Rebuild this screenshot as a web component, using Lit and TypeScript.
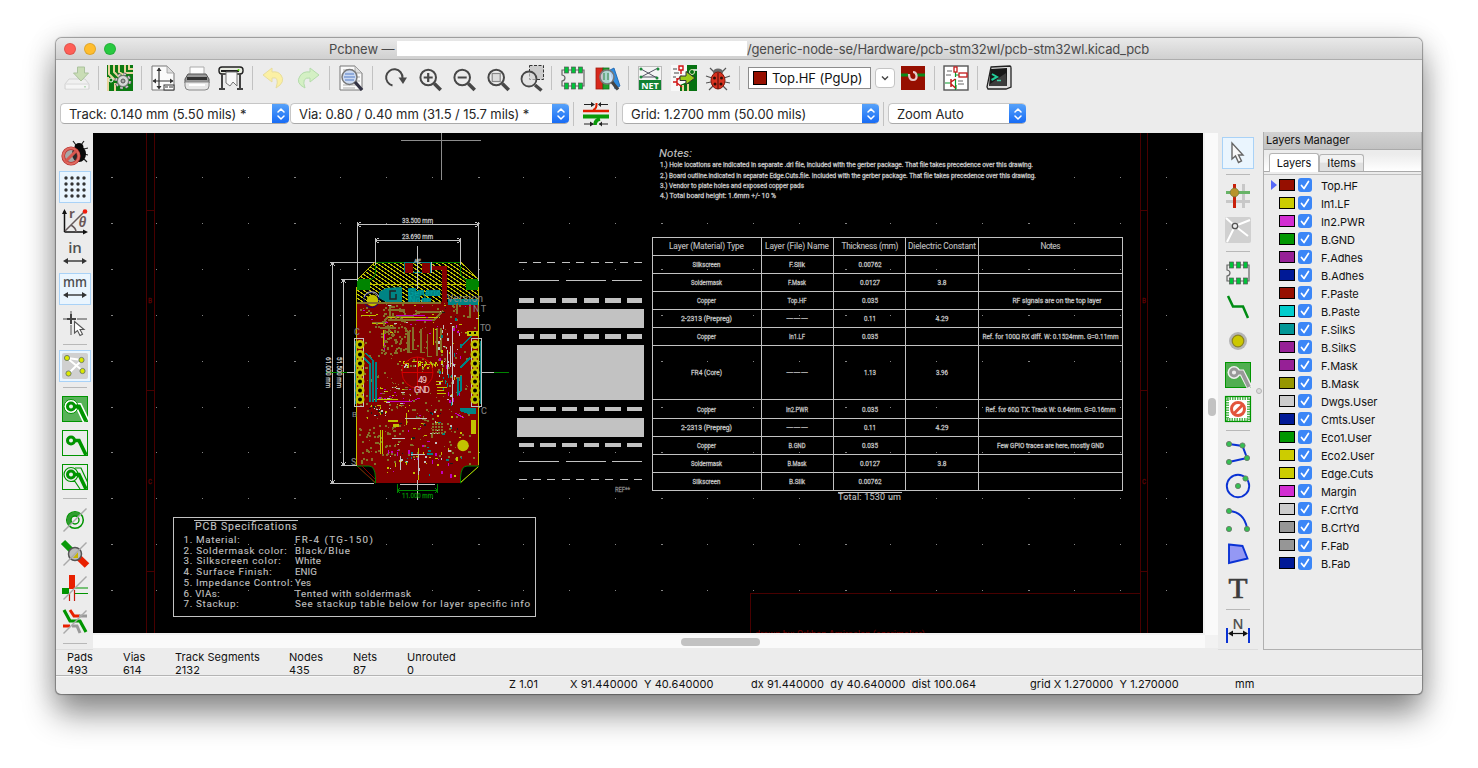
import { LitElement, html, svg, css } from "lit";
import { customElement, property } from "lit/decorators.js";
import { classMap } from "lit/directives/class-map.js";

const G = "#009400";
const LENS = "#484848";

const pageDoc = svg`<path d="M2 1H17L24 8V25H2Z" fill="#fafafa" stroke="#777"/><path d="M17 1V8H24Z" fill="#ddd" stroke="#999" stroke-width=".8"/>`;
const lens = (extra: unknown) => svg`<g transform="translate(.7 0)"><circle cx="12.500" cy="12.500" r="7.800" fill="none" stroke=${LENS} stroke-width="2"/><path d="M18.500 18.500L25 25" stroke=${LENS} stroke-width="3.600"/>${extra}</g>`;
const chip = svg`<path d="M2 5H24V21H2V16Q5 15.5 5 13Q5 10.5 2 10Z" fill="none" stroke="#666" stroke-width="1.2"/>
  ${[5, 12, 19].map((x) => svg`<rect x=${x - 0.5} y="2" width="4" height="6" fill="#00c43a" stroke="#555" stroke-width=".7"/><rect x=${x - 0.5} y="18" width="4" height="6" fill="#00c43a" stroke="#555" stroke-width=".7"/>`)}`;
const node = (x: number, y: number, c = "#35c052") => svg`<circle cx=${x} cy=${y} r="2.6" fill=${c} stroke="#687868" stroke-width=".9"/>`;
const slash = svg`<path d="M1.500 24.500L24.500 1.500" stroke="#aaa" stroke-width="1.500"/>`;

const ICONS: Record<string, unknown> = {
  save: svg`<g opacity=".5"><path d="M5 14H21L25 19V24H1V19Z" fill="#f4f4f4" stroke="#bbb"/><path d="M1.500 19H24.500" stroke="#ccc"/><rect x="2" y="20" width="22" height="3.500" fill="#fff"/><rect x="20" y="21" width="2" height="1.500" fill="#8c8"/><path d="M13.500 2H20.500V8H24.500L17 16L9.500 8H13.500Z" fill="#a8cf80" stroke="#6c9a50"/></g>`,
  boardSetup: svg`<rect width="26" height="26" fill="#0b7a12"/><path d="M2 0V9L8 15M7 0V7L12 12M12 0V7L17 10M18 0V8H26M22 0V4H26M1 12V26M8 18V26" stroke="#e8d49c" stroke-width="2" fill="none"/><circle cx="4" cy="15" r="2" fill="#0b7a12" stroke="#fff"/><circle cx="16" cy="16" r="7" fill="none" stroke="#555" stroke-width="3" stroke-dasharray="2.800 2.700"/><circle cx="16" cy="16" r="7" fill="none" stroke="#ccc" stroke-width="1.600" stroke-dasharray="2.800 2.700"/><circle cx="16" cy="16" r="5.500" fill="#d8d8d8" stroke="#777"/><circle cx="16" cy="16" r="2" fill="#aaa" stroke="#555"/>`,
  pageSize: svg`${pageDoc}<path d="M9 3V23M3 16H23" stroke="#333" stroke-width="1.200"/><path d="M6.500 6L9 2.500L11.500 6ZM6.500 21L9 24.500L11.500 21ZM6 13.500L2.500 16L6 18.500ZM20 13.500L23.500 16L20 18.500Z" fill="#333"/><rect x="14" y="20" width="10" height="5" fill="#fff" stroke="#333"/><path d="M15 22H18M19 22H23" stroke="#333"/>`,
  print: svg`<path d="M6 2H20V11H6Z" fill="#fcfcfc" stroke="#aaa"/><path d="M4 9H22L25 14V18H1V14Z" fill="#999" stroke="#555"/><path d="M3 12H23V15H3Z" fill="#333"/><path d="M1 17H25V21Q25 25 21 25H5Q1 25 1 21Z" fill="#e8e8e8" stroke="#888"/><path d="M5 20H21" stroke="#fff" stroke-width="2"/>`,
  plot: svg`<rect x="1" y="2" width="24" height="7" rx="3" fill="#e8ebe2" stroke="#222" stroke-width="1.400"/><path d="M3 6H21" stroke="#222" stroke-width="1.800"/><circle cx="20.500" cy="5" r="1" fill="#5d0"/><path d="M8 7H19V21L15 17L12 21L8 18Z" fill="#f8f8f8" stroke="#777"/><path d="M4 9V23M22 9V23M1 24H7M19 24H25" stroke="#444" stroke-width="2"/>`,
  undo: svg`<path d="M11 3L2 10L11 17V13Q19 11 15 23Q25 17 20 10Q17 6 11 7Z" fill="#fbf0a4" stroke="#e8dd9c"/>`,
  redo: svg`<path d="M15 3L24 10L15 17V13Q6 12 10 23Q0 18 5 11Q8 6 15 7Z" fill="#d4f0c4" stroke="#b4dcab"/>`,
  find: svg`${pageDoc}<path d="M5 5H15M5 8H15M5 20H21M5 23H17M18 12H22M18 16H22" stroke="#aaa"/><circle cx="11.500" cy="12" r="7.500" fill="#c6d6f0" fill-opacity=".9" stroke="#777" stroke-width="1.500"/><path d="M7 9H16M6 12H17M7 15H16" stroke="#7c9cd4" stroke-width="1.600"/><path d="M17 17L24 25" stroke="#334" stroke-width="3.400"/>`,
  refresh: svg`<path d="M11.500 20.500A8.200 8.200 0 1 1 21.500 13" fill="none" stroke=${LENS} stroke-width="2"/><path d="M17.500 12.500H26L22 19Z" fill=${LENS}/>`,
  zoomIn: lens(svg`<path d="M8 12.500H17M12.500 8V17" stroke=${LENS} stroke-width="2.200"/>`),
  zoomOut: lens(svg`<path d="M8 12.500H17" stroke=${LENS} stroke-width="2.200"/>`),
  zoomFit: lens(svg`<rect x="8.500" y="8.500" width="8" height="8" fill="#ddd" stroke="#888" stroke-width="1.200"/>`),
  zoomArea: svg`<g transform="translate(1 0)"><rect x="11.500" y=".500" width="14" height="14" fill="#ccc" stroke="#333" stroke-width="1" stroke-dasharray="3 1.500"/><circle cx="11" cy="14" r="7.500" fill="#ddd" fill-opacity=".6" stroke=${LENS} stroke-width="1.800"/><path d="M17 20L23.500 25.500" stroke=${LENS} stroke-width="3.400"/></g>`,
  chip,
  library: svg`<rect x="2" y="3" width="7" height="21" fill="#d8281c" stroke="#a01c10" stroke-width=".8"/><rect x="9" y="3" width="6" height="21" fill="#1fa02c" stroke="#147020" stroke-width=".8"/><path d="M16 5L20 3L26 21L21 24Z" fill="#2f8ce0" stroke="#1a60a8" stroke-width=".8"/><circle cx="13" cy="12" r="7" fill="#cfe4f8" fill-opacity=".8" stroke="#777" stroke-width="1.600"/><path d="M10 8V15M14 8V15" stroke="#5a9c70" stroke-width="1.500"/><path d="M18 17L24 24.500" stroke="#444" stroke-width="3.200"/>`,
  net: svg`<rect x="1.500" y="1.500" width="23" height="23" fill="#f4f4f4" stroke="#bbb"/><path d="M4 4L20 13M4 12L21 3M5 12H20" stroke="#445" stroke-width=".9"/><circle cx="4" cy="4" r="1.500" fill="#1a8a3a"/><circle cx="21" cy="4" r="1.500" fill="#1a8a3a"/><circle cx="4" cy="12" r="1.500" fill="#1a8a3a"/><circle cx="20" cy="13" r="1.500" fill="#1a8a3a"/><rect x="2" y="15" width="22" height="10" fill="#128232"/><text x="13" y="23.500" text-anchor="middle" font-size="9" font-weight="700" fill="#fff" font-family="Open Sans, sans-serif">NET</text>`,
  update: svg`<rect width="26" height="26" fill="#f8f8f8"/><path d="M16 0H26V26H9V20L16 17Z" fill="#077212"/><path d="M12 20V26M17 19V26" stroke="#e8d49c" stroke-width="2"/><path d="M26 5H22" stroke="#fff" stroke-width="1.500" fill="none"/><circle cx="21" cy="7" r="2.500" fill="#077212" stroke="#e8e8c0"/><path d="M8 1H12V5H8ZM10 5V9M2 17H6M6 13V21M6 15L11 11M6 18L11 22" fill="none" stroke="#d01010" stroke-width="1.400"/><path d="M2 4H6M3 8H8M2 12H5" stroke="#444"/><path d="M9 11H15V6.500L24 13L15 19.500V15.500H9Z" fill="#9ccc18" stroke="#333"/>`,
  bug: svg`<path d="M5 3L9 7M21 3L17 7M1 11L7 13M25 11L19 13M1 18L6 17M25 18L20 17M4 25L8 21M22 25L18 21" stroke="#555" stroke-width="1.200"/><ellipse cx="13" cy="7" rx="5" ry="3.500" fill="#666"/><ellipse cx="13" cy="15.500" rx="7" ry="8.500" fill="#d8321f" stroke="#801408"/><path d="M13 8V24" stroke="#4a0c08"/><circle cx="9.500" cy="13" r="1.500" fill="#301008"/><circle cx="16.500" cy="13" r="1.500" fill="#301008"/><circle cx="10" cy="19" r="1.500" fill="#301008"/><circle cx="16" cy="19" r="1.500" fill="#301008"/>`,
  layerPair: svg`<rect x="1" y="1" width="24" height="24" fill="#960f00"/><path d="M1 10H8M17 10H25" stroke="#0a8a1a" stroke-width="3"/><path d="M9 9Q9 15 13 15Q17 15 16.500 10.500Q16 7 13 7" fill="none" stroke="#e8c8c8" stroke-width="2.200"/>`,
  schematic: svg`<rect x="1" y="1" width="24" height="24" fill="#fff" stroke="#555" stroke-width="1.400"/><path d="M12.500 5V12M12.500 14V25M16 10H12.500M2 18H8M13 24V20" stroke="#0a9a2a" stroke-width="1.200"/><rect x="11" y="2" width="3" height="5" fill="#fff" stroke="#c41a1a" stroke-width="1.300"/><rect x="16" y="8" width="8" height="4" fill="#fff" stroke="#c41a1a" stroke-width="1.300"/><path d="M8 14V22M8 17L12.500 14M8 19L12.500 23" stroke="#c41a1a" stroke-width="1.500"/><path d="M4 6H9M3 10H8M15 16H20M15 19H21" stroke="#666"/>`,
  terminal: svg`<path d="M5 2L24 1Q25 1 25 3V22L20 24H2L1 22Z" fill="#e0e0e0" stroke="#222" stroke-width="1.300"/><path d="M4.500 4L21 3V21H3Z" fill="#181818"/><path d="M6 9L11 12L5.500 15" fill="none" stroke="#2c9" stroke-width="2"/><path d="M11 15.500H15" stroke="#2c9" stroke-width="1.500"/><path d="M4 19L20 8L21 21H3Z" fill="#fff" opacity=".16"/>`,
  autoTrack: svg`<g transform="translate(1 0)"><path d="M0 10H26" stroke="#e02000" stroke-width="2.400"/><path d="M10 9Q14 8 13.500 2" stroke="#e02000" stroke-width="2" fill="none"/><path d="M0 15.500H26" stroke="#0a9a0a" stroke-width="4"/><path d="M12 24Q12 19 17 18" stroke="#0a9a0a" stroke-width="3.600" fill="none"/><path d="M1 3.500H10M16 3.500H25M1 23H10M16 23H25" stroke="#222" stroke-width="1.200"/><path d="M8 1L12 3.500L8 6ZM18 1L15 3.500L18 6ZM7 20.500L11 23L7 25.500ZM19 20.500L16 23L19 25.500Z" fill="#222"/></g>`,
  drcOff: svg`<g stroke="#222" stroke-width="1.200" fill="none"><path d="M11 1L14 5M22 1L19 5M22 9L26 8M22 14L26 15M21 18L25 22"/></g><ellipse cx="17" cy="7" rx="4.500" ry="4" fill="#080808"/><ellipse cx="17" cy="14" rx="7" ry="8" fill="#080808"/><circle cx="9" cy="16" r="7.800" fill="#555" fill-opacity=".45" stroke="#b43030" stroke-width="3.600"/><circle cx="9" cy="16" r="7.800" fill="none" stroke="#e06a60" stroke-width="2.200"/><path d="M3.500 21.500L14.500 10.500" stroke="#d8564e" stroke-width="3"/>`,
  grid: svg`${[4, 10, 16, 22].map((y) => [4, 10, 16, 22].map((x) => svg`<circle cx=${x} cy=${y} r="1.700" fill="#333"/>`))}`,
  polar: svg`<path d="M2.500 24V3M2.500 24H23" stroke="#111" stroke-width="1.500"/><path d="M0 6L2.500 1L5 6ZM21 21.500L26 24L21 26.500Z" fill="#111"/><path d="M3 23L22 4M9 17Q14 20 14 24" stroke="#665a5a" stroke-width="1.500" fill="none"/><circle cx="23" cy="3.500" r="2.300" fill="#f21c0c"/><text x="7" y="10" font-size="13" font-weight="700" fill="#6a5858" font-family="Open Sans, sans-serif">r</text><text x="16.500" y="19" font-size="14" font-style="italic" font-weight="700" fill="#6a5858" font-family="Liberation Sans, sans-serif">θ</text>`,
  inch: svg`<text x="13" y="11" text-anchor="middle" font-size="15" font-weight="600" fill="#505050" font-family="Open Sans, sans-serif">in</text><path d="M3 19H23" stroke="#333" stroke-width="1.400"/><path d="M6 16L1 19L6 22ZM20 16L25 19L20 22Z" fill="#333"/>`,
  mm: svg`<text x="13" y="11" text-anchor="middle" font-size="14" textLength="24" lengthAdjust="spacingAndGlyphs" font-weight="600" fill="#505050" font-family="Open Sans, sans-serif">mm</text><path d="M3 19H23" stroke="#333" stroke-width="1.400"/><path d="M6 16L1 19L6 22ZM20 16L25 19L20 22Z" fill="#333"/>`,
  cursor: svg`<path d="M1 9H5M15 9H25M9 1V4M9 15V25" stroke="#999" stroke-width="1.800"/><path d="M5 9H14M9 4V14" stroke="#444" stroke-width="2"/><path d="M12.500 11.500V23L15.500 20.500L18 25.500L20.500 24.300L18 19.500H22Z" fill="#fff" stroke="#555" stroke-width="1.100"/>`,
  ratsnest: svg`<rect width="26" height="26" rx="2" fill="#d0d0d0"/><path d="M5 5L20 7M5 5L21 18M7 20L20 7" stroke="#fff" stroke-width="2"/>${[[5, 5], [19.5, 7], [6.5, 20.5], [20.5, 18]].map(([x, y]) => node(x, y, "#dce800"))}`,
  zoneFill: svg`<rect x=".5" y=".5" width="25" height="25" fill="#58b258" stroke=${G}/><path d="M9 10.500H17L24 25" stroke="#fff" stroke-width="7" fill="none"/><circle cx="9" cy="10.500" r="7" fill="#fff" stroke=${G}/><path d="M9 10.500H17L24 25" stroke=${G} stroke-width="4" fill="none"/><circle cx="9" cy="10.500" r="3.500" fill="#eee" stroke=${G} stroke-width="3"/>`,
  zoneNone: svg`<rect x=".5" y=".5" width="25" height="25" fill="none" stroke=${G}/><path d="M9 10.500H17L24 25" stroke=${G} stroke-width="3.600" fill="none"/><circle cx="9" cy="10.500" r="3.500" fill="#eee" stroke=${G} stroke-width="3"/>`,
  zoneOutline: svg`<rect x=".5" y=".5" width="25" height="25" fill="none" stroke=${G}/><path d="M13 4H19L25.500 18M8 17.500H13L18 25" stroke=${G} stroke-width="1.200" fill="none"/><circle cx="9" cy="10.500" r="7" fill="none" stroke=${G} stroke-width="1.200"/><path d="M9 10.500H17L24 25" stroke=${G} stroke-width="3.600" fill="none"/><circle cx="9" cy="10.500" r="3.500" fill="#eee" stroke=${G} stroke-width="3"/>`,
  padSketch: svg`<circle cx="13" cy="13" r="8.300" fill="none" stroke=${G} stroke-width="1.500"/><path d="M7 19A8.500 8.500 0 0 1 19 7Z" fill="#2f9c2f"/><circle cx="13" cy="13" r="4" fill="#eee" stroke=${G} stroke-width="1.400"/>${slash}`,
  viaSketch: svg`<path d="M1 1L13 13" stroke="#0a9a0a" stroke-width="6"/><path d="M13 13L25 24.500" stroke="#e82000" stroke-width="6.500"/><circle cx="13" cy="13" r="6.500" fill="#bbb" stroke="#555" stroke-width="1.500"/><path d="M11 17L16 11V17Z" fill="#c8b400"/>${slash}`,
  trackSketch: svg`<path d="M0 16H7" stroke=${G} stroke-width="6"/><path d="M12 13H26M12 18.500H26" stroke=${G} stroke-width="1.200"/><path d="M10 0V14" stroke="#e82000" stroke-width="6"/><path d="M7.500 18V26M12.500 15V26" stroke="#c41a0a" stroke-width="1.200"/>${slash}`,
  contrast: svg`<path d="M8 1L12 7H18" stroke="#e82000" stroke-width="3" fill="none"/><path d="M17 7H25M10 17H15L18 24" stroke="#999" stroke-width="3" fill="none"/><path d="M1 17H8" stroke="#e82000" stroke-width="3"/><path d="M2 1L8 12H18L24 23" stroke=${G} stroke-width="3.200" fill="none"/>${slash}`,
  select: svg`<path d="M7 3V19L10.500 16L13.500 22.500L16.500 21L13.500 15H18Z" fill="#f8f8f8" stroke="#666" stroke-width="1.400"/>`,
  highlight: svg`<path d="M18.500 1V25M1 18.500H25" stroke="#c8c8c8" stroke-width="3"/><path d="M1 9.500H25" stroke="#68b468" stroke-width="3"/><path d="M9.500 1V25" stroke="#c8200a" stroke-width="3"/><circle cx="9.500" cy="9.500" r="4.300" fill="#b8942c" stroke="#7c7c40" stroke-width=".8"/>`,
  localRats: svg`<rect width="26" height="26" rx="2" fill="#d0d0d0"/><path d="M1 1L10 9M10 9L25 3M10 9L23 19M10 9L2 25" stroke="#fff" stroke-width="2"/><circle cx="10" cy="9" r="2.700" fill="#eee" stroke="#555" stroke-width="1.300"/>`,
  route: svg`<path d="M3 2L8 12.500H18L23 24" fill="none" stroke="#008c14" stroke-width="2.500"/>`,
  via: svg`<circle cx="13" cy="13" r="9" fill="#b4b4b4"/><circle cx="13" cy="13" r="5.800" fill="#ccc800" stroke="#8c8420" stroke-width="1.200"/>`,
  zone: svg`<rect x=".5" y=".5" width="25" height="25" fill="#50ae50" stroke=${G}/><path d="M9 10.500H17L25 26" stroke="#f0f0f0" stroke-width="6" fill="none"/><circle cx="9" cy="10.500" r="6.500" fill="#f0f0f0"/><path d="M9 10.500H17L24 25" stroke="#999" stroke-width="3.800" fill="none"/><circle cx="9" cy="10.500" r="3.500" fill="#eee" stroke="#999" stroke-width="2.800"/>`,
  keepout: svg`<rect x="2" y="2" width="22" height="22" fill="#fff" stroke="#56b856" stroke-width="4" stroke-dasharray="1.500 1"/><rect x=".500" y=".500" width="25" height="25" fill="none" stroke=${G} stroke-width="1.200"/><circle cx="13" cy="13" r="6.500" fill="#fff" stroke="#e2543c" stroke-width="3"/><path d="M9 17.500L17.500 9" stroke="#e2543c" stroke-width="3"/>`,
  line: svg`<path d="M4 5L17.500 7L22 19L4 23" fill="none" stroke="#0a32d4" stroke-width="2"/>${node(4, 5)}${node(17.5, 6.5)}${node(22, 19)}${node(4, 23)}`,
  circle: svg`<circle cx="13" cy="13" r="11.200" fill="none" stroke="#0a32d4" stroke-width="1.900"/>${node(13, 13)}${node(20.500, 5.500)}`,
  arc: svg`<path d="M4 4Q19 5 22 21" fill="none" stroke="#0a32d4" stroke-width="1.900"/>${node(4, 4)}${node(22, 22)}${node(4, 22)}`,
  polygon: svg`<path d="M4 3.500L17.500 5L22.500 17.500L4 22Z" fill="#9498f4" stroke="#0a32d4" stroke-width="1.900"/>`,
  text: svg`<text x="13" y="22.500" text-anchor="middle" font-size="30" textLength="19" lengthAdjust="spacingAndGlyphs" fill="#3c3c3c" stroke="#3c3c3c" stroke-width=".7" font-family="Liberation Serif, serif">T</text>`,
  dimension: svg`<text x="13" y="11" text-anchor="middle" font-size="14" font-weight="600" fill="#505050" font-family="Open Sans, sans-serif">N</text><path d="M2 10V25M24 10V25" stroke="#0a32d4" stroke-width="2"/><path d="M4 15.500H22" stroke="#111" stroke-width="1.200"/><path d="M8 12.500L3 15.500L8 18.500ZM18 12.500L23 15.500L18 18.500Z" fill="#111"/>`,
};

@customElement("tool-button")
class ToolButton extends LitElement {
  @property() icon = "";
  @property({ type: Boolean }) active = false;
  static styles = css`
    :host { display: flex; flex: none; width: 34px; height: 34px; align-items: center; justify-content: center; }
    .box { box-sizing: border-box; width: 32px; height: 32px; display: grid; place-items: center; border: 1px solid transparent; }
    .active { background: #eaf5fe; border-color: #a9d2f7; }
    svg { width: 26px; height: 26px; overflow: visible; display: block; }
  `;
  render() {
    return html`<div class=${classMap({ box: true, active: this.active })}><svg viewBox="0 0 26 26">${ICONS[this.icon]}</svg></div>`;
  }
}

@customElement("mac-select")
class MacSelect extends LitElement {
  @property() label = "";
  static styles = css`
    :host { display: flex; box-sizing: border-box; height: 21px; background: #fff; border: 1px solid #c6c6c6; border-right: 0; border-bottom-color: #aaa; border-radius: 4.5px; overflow: hidden; align-items: center; }
    .label { flex: 1; padding-left: 8px; font: 13px Inter, sans-serif; letter-spacing: -0.07px; color: #262626; white-space: pre; }
    .knob { width: 17px; height: 21px; background: linear-gradient(#5aa5fa, #1469f5); display: grid; place-items: center; flex: none; }
    svg { width: 8px; height: 12px; fill: none; stroke: #fff; stroke-width: 1.5; stroke-linecap: round; stroke-linejoin: round; }
  `;
  render() {
    return html`<span class="label">${this.label}</span><span class="knob"><svg viewBox="0 0 8 12"><path d="M1 4L4 1L7 4M1 8L4 11L7 8" /></svg></span>`;
  }
}

const INK = "#c2c2c2";
type Label = { x: number; y: number; w: number; s: string; size?: number; fill?: string; italic?: boolean };
const label = (l: Label) => {
  const size = l.size ?? 9.8;
  const fill = l.fill ?? INK;
  return svg`<text x=${l.x} y=${l.y} textLength=${l.w} lengthAdjust=${size < 8 ? "spacingAndGlyphs" : "spacing"} font-size=${size} fill=${fill} stroke=${fill} stroke-width=${size < 8 ? 0.3 : 0.1} font-style=${l.italic ? "italic" : "normal"}>${l.s}</text>`;
};
const centred = (cx: number, y: number, w: number, s: string, size = 7) => label({ x: cx - w / 2, y, w, s, size });

const COLS = [652.5, 761.5, 833.5, 905.5, 978.5, 1122.5];
const ROWS = [237.5, 255.5, 273.5, 291.5, 309.5, 327.5, 345.5, 399.5, 418.5, 436.5, 454.5, 472.5, 490.5];
const MID = [706.5, 797, 870, 942, 1050.5];
const HEAD: [string, number][] = [["Layer (Material) Type", 75], ["Layer (File) Name", 64], ["Thickness (mm)", 57], ["Dielectric Constant", 68], ["Notes", 20]];
const CELLS: [string, number][][] = [
  [["Silkscreen", 28], ["F.Silk", 16], ["0.00762", 23]],
  [["Soldermask", 31], ["F.Mask", 18], ["0.0127", 20], ["3.8", 9]],
  [["Copper", 19], ["Top.HF", 19], ["0.035", 16], ["", 0], ["RF signals are on the top layer", 89]],
  [["2-2313 (Prepreg)", 51], ["———", 22], ["0.11", 12], ["4.29", 13]],
  [["Copper", 19], ["In1.LF", 16], ["0.035", 16], ["", 0], ["Ref. for 100Ω RX diff. W: 0.1524mm. G=0.11mm", 136]],
  [["FR4 (Core)", 31], ["———", 22], ["1.13", 12], ["3.96", 12]],
  [["Copper", 19], ["In2.PWR", 22], ["0.035", 16], ["", 0], ["Ref. for 60Ω TX. Track W: 0.64mm. G=0.16mm", 130]],
  [["2-2313 (Prepreg)", 51], ["———", 22], ["0.11", 12], ["4.29", 13]],
  [["Copper", 19], ["B.GND", 17], ["0.035", 16], ["", 0], ["Few GPIO traces are here, mostly GND", 107]],
  [["Soldermask", 31], ["B.Mask", 19], ["0.0127", 20], ["3.8", 9]],
  [["Silkscreen", 28], ["B.Silk", 16], ["0.00762", 23]],
];

const SPEC: [string, number, string, number][] = [
  ["1. Material:", 56, "FR-4 (TG-150)", 78],
  ["2. Soldermask color:", 103, "Black/Blue", 55],
  ["3. Silkscreen color:", 97, "White", 26],
  ["4. Surface Finish:", 88, "ENIG", 22],
  ["5. Impedance Control:", 109, "Yes", 16],
  ["6. VIAs:", 36, "Tented with soldermask", 116],
  ["7. Stackup:", 55, "See stackup table below for layer specific info", 235],
];

function scatter(seed: number) {
  let s = seed;
  const rnd = () => {
    s = (s + 0x6d2b79f5) | 0;
    let t = Math.imul(s ^ (s >>> 15), 1 | s);
    t = (t + Math.imul(t ^ (t >>> 7), 61 | t)) ^ t;
    return ((t ^ (t >>> 14)) >>> 0) / 4294967296;
  };
  const out: unknown[] = [];
  const put = (n: number, x: number, y: number, w: number, h: number, colors: string[], mw: number, mh: number) => {
    for (let i = 0; i < n; i++) {
      const c = colors[Math.floor(rnd() * colors.length)];
      out.push(svg`<rect x=${Math.round(x + rnd() * w)} y=${Math.round(y + rnd() * h)} width=${1 + Math.floor(rnd() * mw)} height=${1 + Math.floor(rnd() * mh)} fill=${c}/>`);
    }
  };
  const via = "#84702a", yel = "#c2c200", mag = "#c200c2", teal = "#008484";
  put(90, 359, 303, 116, 150, [via], 1, 1);
  for (let i = 0; i < 170; i++) out.push(svg`<rect x=${359 + Math.round(rnd() * 116)} y=${303 + Math.round(rnd() * 160)} width="2" height="2" fill=${via}/>`);
  for (let i = 0; i < 100; i++) out.push(svg`<rect x=${380 + Math.round(rnd() * 26)} y=${305 + Math.round(rnd() * 48)} width="2" height="2" fill=${via}/>`);
  for (let i = 0; i < 45; i++) out.push(svg`<rect x=${359 + Math.round(rnd() * 36)} y=${424 + Math.round(rnd() * 40)} width="2" height="2" fill=${via}/>`);
  put(46, 398, 360, 50, 8, [yel, via, INK, yel], 2, 2);
  put(60, 438, 318, 22, 86, [mag, INK, yel, teal, INK], 2, 4);
  put(50, 376, 386, 34, 22, [mag, yel, via, INK], 4, 1);
  put(60, 392, 410, 70, 56, [yel, INK, mag, "#1c1c1c", yel, teal], 3, 2);
  put(34, 385, 450, 74, 26, [yel, INK, mag, teal], 2, 4);
  put(34, 360, 304, 116, 30, [yel, INK, mag, "#1c1c1c"], 3, 1);
  put(24, 366, 405, 22, 15, ["#1c1c1c", yel, INK], 2, 2);
  return out;
}

const dots: unknown[] = [];
for (let i = 0; i <= 23; i++) for (let j = 0; j <= 9; j++) dots.push(svg`<rect x=${Math.round(110.5 + i * 45.88)} y=${Math.round(177 + j * 45.9)} width=${i % 4 ? 1 : 2} height="1"/>`);

const dashRow = (y: number, h: number, xs: number[][]) => xs.map(([a, b]) => svg`<rect x=${a} y=${y} width=${b - a} height=${h}/>`);
const SILK = [[519, 527], [533, 541], [547, 555], [562, 570], [576, 584], [591, 599], [605, 613], [620, 628], [634, 642]];
const MASK = [[519, 559], [566, 606], [612, 642]];
const COPPER = [[519, 534], [540, 556], [562, 577], [584, 599], [605, 621], [627, 642]];

@customElement("pcb-canvas")
class PcbCanvas extends LitElement {
  static styles = css`
    :host { display: block; width: 1110px; height: 500px; background: #000; }
    svg { display: block; width: 1110px; height: 500px; font-family: Roboto, sans-serif; font-weight: 400; }
    .crisp { shape-rendering: crispEdges; }
  `;
  render() {
    return html`<svg viewBox="93 133 1110 500">
      <defs>
        <pattern id="hatch" width="6" height="4" patternUnits="userSpaceOnUse"><path class="crisp" d="M-1 -0.667L7 4.667M-1 3.333L1 4.667M5 -.667L7 .667" stroke="#c2c200" stroke-width="1.100" /></pattern>
      </defs>
      ${this.sheet()} ${this.board()} ${this.stackup()} ${this.table()} ${this.specs()}
    </svg>`;
  }
  sheet() {
    return svg`<g class="crisp" fill="#848484">${dots}</g>
      <g class="crisp" stroke="#480000" fill="none">
        <path d="M146.500 133V633M154.500 133V633M146.500 210.500H154.500M146.500 390.500H154.500M146.500 571.500H154.500"/>
        <path d="M1140.500 133V633M1147.500 133V633M1140.500 210.500H1147.500M1140.500 390.500H1147.500M1140.500 571.500H1147.500M750.500 633V593.500H1140.500"/>
      </g>
      ${[[148, 303, "B"], [148, 484, "C"], [1142, 303, "B"], [1142, 484, "C"]].map(([x, y, s]) => label({ x: +x, y: +y, w: 4, s: String(s), size: 7, fill: "#600000" }))}
      ${label({ x: 755, y: 636.5, w: 170, s: "drawn by: Orkhan Amiraslan (azerimaker)", size: 9, fill: "#700000" })}
      <path class="crisp" d="M401 140.500H481M441.500 133V180" stroke="#8c8c8c"/>`;
  }
  board() {
    const pads = [344.5, 354.5, 363.5, 372.5, 381.5, 390.5, 399.5];
    return svg`
      <path d="M375 262H461L479 280V303H357V280Z" fill="url(#hatch)"/>
      <path class="crisp" d="M357 284.500H479" stroke="#c2c200"/>
      <path d="M375.500 262.500H461M375.500 263V272Q375 278 370 280M460.500 263V272Q461 278 466 280" stroke="#008400" fill="none"/>
      <path d="M357 280L375 262M461 262L479 280" stroke="#c2c200" fill="none"/>
      <g class="crisp"><rect x="357" y="279" width="13" height="11" fill="#008400"/><rect x="466" y="279" width="13" height="11" fill="#008400"/></g>
      <path class="crisp" d="M356 302H479V465L461 483H375L356 465Z" fill="#840000"/>
      <path class="crisp" d="M356.500 287V465M478.500 287V465" stroke="#c2c200"/>
      <g class="crisp">
        <path d="M430 266H447V304H442V270H430Z" fill="#840000"/>
        <rect x="404.500" y="262.500" width="26" height="10" fill="none" stroke="#008484"/>
        <rect x="405" y="263" width="8" height="10" fill="#840000"/><rect x="422" y="263" width="8" height="10" fill="#840000"/>
        <path d="M431.500 262V273" stroke=${INK}/>
      </g>
      <circle cx="371.500" cy="300" r="7.500" fill="none" stroke="#0a0a84"/><path d="M364 297A8 8 0 0 1 379 297" stroke=${INK} fill="none"/>
      <circle cx="372.500" cy="300.500" r="5.700" fill="#c2c200"/>
      <path d="M379 292L386 288L402 287V302H386L379 298Z" fill="#008484"/><path d="M396 291H390V299H396V294" stroke="#222" stroke-width="1.500" fill="none"/>
      <path d="M408 288H416V292H420V302H408ZM418 290H424V295H418ZM426 290H440V296H426ZM422 298H431V302H422ZM448 299H478V305H448Z" fill="#008484"/>
      ${label({ x: 408, y: 295.500, w: 33, s: "Generic", size: 9, fill: "#00a0a0" })}${label({ x: 409, y: 303, w: 22, s: "Node", size: 9, fill: "#00a0a0" })}
      ${label({ x: 447, y: 302, w: 36, s: "Version", size: 10, fill: "#848484" })}${label({ x: 473, y: 312, w: 13, s: "NT", size: 9, fill: "#848484" })}
      ${label({ x: 480, y: 331, w: 11, s: "TO", size: 9, fill: "#848484" })}${label({ x: 354, y: 335, w: 5, s: "C", size: 9, fill: "#848484" })}
      ${label({ x: 481, y: 414, w: 6, s: "C", size: 9, fill: "#848484" })}${label({ x: 352, y: 417, w: 5, s: "B", size: 8, fill: "#848484" })}${label({ x: 351, y: 465, w: 5, s: "S", size: 9, fill: "#848484" })}
      ${label({ x: 414, y: 263, w: 7, s: "AE", size: 6, fill: "#a0a0a0" })}
      <g class="crisp">
        <path d="M357 302.500H441M390 316V307H395M372 323H383L388 317H412L418 312H440M388 320H434L443 311M380 328H396M388 310H405M409 331V353M413 327V350M421 329V353M437 328V356M441 328V352M457 304V314M470 304V318" fill="none" stroke="#84702a" stroke-width="2"/>
        ${[[407, 330], [412, 327], [420, 330], [427, 334]].map(([x, y]) => svg`<path d="M${x + 0.5} ${y}V${y + 22}H${x + 5}" fill="none" stroke="#84702a"/>`)}
        <path d="M361 315.500H376M388 317.500H440M372 323H386" stroke="#c2c200" fill="none"/>
        <path d="M396 315.500H425M416 320H432M384 331V350M386 401H412L420 398" stroke="#c200c2" fill="none"/>
        ${scatter(7)}
        <path d="M383.500 330V346M433.500 328V345M406 413V425M380.500 430V454M382.500 430V454M418.500 448V480M372 399H398" stroke="#c2c200" fill="none"/>
        <path d="M452.500 327V405M450 346V367M430 433.500H440M411 454.500H425M418.500 454V475M392 438.500H405M405 418.500H427M447.500 350V375M400 456V470" stroke=${INK} fill="none"/>
        <path d="M366 353L373 361V402M364 358L370 364V402M376 362V402M462 345L472 336M460 368L470 358M458 378V394L461 390V376" stroke="#008484" fill="none" stroke-width="1.500"/>
        <path d="M403 363H408V368M412 361H420V366M424 364H432V368" stroke="#c2c200" fill="none"/>
        ${[0, 1, 2, 3].map((i) => [0, 1, 2, 3].map((j) => svg`<rect x=${432 + i * 3} y=${423 + j * 3} width="2" height="2" fill="#84702a"/>`))}
        <rect x="388" y="420" width="10" height="2" fill="#c2c200"/><rect x="393" y="424" width="6" height="3" fill="#c2c200"/>
        <path d="M436 381.500H443M436 384.500H441M437 387.500H447M437 390.500H444M437 393.500H446" stroke="#c2c200"/>
        <path d="M460 408H476V414H468L460 411Z" fill="#008484"/><rect x="471" y="420" width="5" height="14" fill="#c2c200"/><path d="M455 413L464 418" stroke="#c200c2"/>
        <rect x="467" y="331" width="11" height="5" fill="#c2c200"/><rect x="469" y="332" width="2" height="2" fill="#000"/><rect x="474" y="332" width="2" height="2" fill="#000"/>
        <rect x="354.500" y="338.500" width="9" height="68" fill="none" stroke=${INK}/><rect x="471.500" y="338.500" width="10" height="68" fill="none" stroke=${INK}/>
        <path d="M355.500 341V404M480.500 341V404" stroke="#008484"/>
      </g>
      ${pads.map((y) => svg`<circle cx="360" cy=${y} r="4.500" fill="#c2c200"/><circle cx="360" cy=${y} r="2" fill="#000"/><circle cx="475" cy=${y} r="4.500" fill="#c2c200"/><circle cx="475" cy=${y} r="2" fill="#000"/>`)}
      <circle cx="463" cy="445.500" r="5.700" fill="#c2c200"/>
      <path d="M403 373H432A15 15 0 0 1 403 373Z" fill="#840000"/>
      <circle cx="417.500" cy="372.500" r="15.500" fill="none" stroke="#d40000"/><path class="crisp" d="M402 372.500H433M417.500 357V388" stroke="#d40000"/>
      ${label({ x: 418, y: 383, w: 9, s: "49", size: 9, fill: "#e8c0c0" })}${label({ x: 414, y: 393, w: 16, s: "GND", size: 9, fill: "#e8c0c0" })}
      <path d="M357 466H369Q375 466 375.500 478V483ZM479 466H467Q461 466 460.500 478V483Z" fill="#000" stroke="#008400"/>
      <path d="M478 467L461 482" stroke="#c2c200"/><path d="M358 467L375 482M362 466L375 479" stroke="#840000"/>
      <g class="crisp" stroke=${INK} fill="none">
        <path d="M357.500 281V222M478.500 281V222M357.500 224.500H478.500M375.500 265V238M460.500 265V238M375.500 240.500H460.500"/>
        <path d="M360.500 222L357.500 224.500L360.500 227M475.500 222L478.500 224.500L475.500 227M378.500 238L375.500 240.500L378.500 243M457.500 238L460.500 240.500L457.500 243"/>
        <path d="M330 262.500H374M332.500 262V483M330 483.500H374M341 279.500H357M343.500 279V465M341 465.500H357"/>
        <path d="M330 266L332.500 263L335 266M341 283L343.500 280L346 283M330 480L332.500 483L335 480M341 462L343.500 465L346 462"/>
        <path d="M417.500 246V289M417.500 480V500M400 484.500H435M347 372.500H355M481 372.500H494"/>
      </g>
      <g class="crisp" stroke="#008400" fill="none"><path d="M326 372.500H347M494 372.500H509M397.500 484V493M437.500 484V493M397.500 490.500H437.500M400 488L397.500 490.500L400 493M435 488L437.500 490.500L435 493"/></g>
      ${label({ x: 402, y: 222.5, w: 31, s: "33.500 mm", size: 7 })}${label({ x: 402, y: 239, w: 31, s: "23.690 mm", size: 7 })}${label({ x: 402, y: 497.500, w: 31, s: "11.000 mm", size: 7, fill: "#008400" })}
      <g transform="rotate(90 326 357)">${label({ x: 326, y: 357, w: 31, s: "61.000 mm", size: 7 })}</g>
      <g transform="rotate(90 336.500 357)">${label({ x: 336.500, y: 357, w: 31, s: "51.500 mm", size: 7 })}</g>`;
  }
  stackup() {
    return svg`<g class="crisp" fill=${INK}>
      ${dashRow(262, 1, SILK)}${dashRow(280, 1, MASK)}${dashRow(298, 5, COPPER)}
      <rect x="517" y="309" width="127" height="19"/>${dashRow(334, 5, COPPER)}
      <rect x="517" y="345" width="127" height="55"/>${dashRow(407, 4, COPPER)}
      <rect x="517" y="418" width="127" height="19"/>${dashRow(443, 4, COPPER)}${dashRow(461, 1, MASK)}${dashRow(479, 1, SILK)}
      </g>${label({ x: 615, y: 492, w: 15, s: "REF**", size: 7, fill: "#848484" })}`;
  }
  table() {
    return svg`<g class="crisp" stroke=${INK} fill="none">
      ${ROWS.map((y) => svg`<path d="M652 ${y}H1123"/>`)}${COLS.map((x) => svg`<path d="M${x} 237V491"/>`)}<path d="M838 492.500H902"/></g>
      ${label({ x: 659, y: 157, w: 33, s: "Notes:", size: 11.5, italic: true })}
      ${label({ x: 660, y: 167, w: 373, s: "1.) Hole locations are indicated in separate .drl file, included with the gerber package. That file takes precedence over this drawing.", size: 6.5 })}
      ${label({ x: 660, y: 178, w: 376, s: "2.) Board outline indicated in separate Edge.Cuts.file. Included with the gerber package. That file takes precedence over this drawing.", size: 6.5 })}
      ${label({ x: 660, y: 188, w: 144, s: "3.) Vendor to plate holes and exposed copper pads", size: 6.5 })}
      ${label({ x: 660, y: 198, w: 116, s: "4.) Total board height: 1.6mm +/- 10 %", size: 6.5 })}
      ${HEAD.map(([s, w], i) => centred(MID[i], 249, w, s, 8.3))}
      ${CELLS.map((row, r) => row.map(([s, w], i) => (s ? centred(i === 4 && r === 2 ? 1057 : MID[i], (ROWS[r + 1] + ROWS[r + 2]) / 2 + 2.5, w, s) : "")))}
      ${label({ x: 838, y: 500, w: 63, s: "Total: 1530 um", size: 9 })}`;
  }
  specs() {
    return svg`<g class="crisp" stroke=${INK} fill="none"><rect x="173.500" y="517.500" width="362" height="99"/><path d="M194 520.500H298"/></g>
      ${label({ x: 195, y: 530, w: 102, s: "PCB Specifications", size: 10.5 })}
      ${SPEC.map(([a, aw, b, bw], i) => svg`${label({ x: 183.500, y: 543 + i * 10.7, w: aw, s: a })}${label({ x: 295, y: 543 + i * 10.7, w: bw, s: b })}`)}`;
  }
}

const LAYERS: [string, string][] = [
  ["Top.HF", "#960f00"], ["In1.LF", "#cccc00"], ["In2.PWR", "#d22dd2"], ["B.GND", "#009600"], ["F.Adhes", "#962096"], ["B.Adhes", "#001996"],
  ["F.Paste", "#960f00"], ["B.Paste", "#00cdcd"], ["F.SilkS", "#009696"], ["B.SilkS", "#962096"], ["F.Mask", "#962096"], ["B.Mask", "#969600"],
  ["Dwgs.User", "#cdcdcd"], ["Cmts.User", "#001996"], ["Eco1.User", "#009600"], ["Eco2.User", "#cccc00"], ["Edge.Cuts", "#cccc00"], ["Margin", "#d22dd2"],
  ["F.CrtYd", "#cdcdcd"], ["B.CrtYd", "#969696"], ["F.Fab", "#969696"], ["B.Fab", "#001996"],
];

@customElement("layers-manager")
class LayersManager extends LitElement {
  static styles = css`
    :host { display: flex; flex-direction: column; box-sizing: border-box; width: 159px; height: 518px; border: solid #b0b0b0; border-width: 0 1px 1px; background: #ececec; font: 11px Inter, sans-serif; color: #111; }
    .head { box-sizing: border-box; height: 18px; padding: 1px 2px; line-height: 15px; background: linear-gradient(#d2d2d2, #c2c2c2); border-bottom: 1px solid #aaa; }
    .tabs { display: flex; padding: 3px 0 0 5px; background: linear-gradient(#ececec 20%, #fff); align-items: flex-end; border-bottom: 1px solid #aaa; height: 18px; }
    .tab { box-sizing: border-box; height: 17px; width: 45px; border: 1px solid #b4b4b4; border-bottom: 0; border-radius: 3px 3px 0 0; text-align: center; line-height: 17px; background: linear-gradient(#f2f2f2 45%, #e0e0e0 50%); }
    .on { width: 50px; height: 19px; background: #fff; line-height: 19px; margin-bottom: -1px; }
    .list { border-top: 1px solid #c0c0c0; margin-top: 2px; padding-top: 1px; }
    .row { display: flex; align-items: center; height: 18px; }
    .mark { width: 0; height: 0; margin: 0 2px 0 7px; border: solid transparent; border-width: 5px 0 5px 6px; }
    .cur { border-left-color: #5468f8; }
    .swatch { box-sizing: border-box; width: 16px; height: 12px; border: 1px solid #000; }
    .check { width: 14px; height: 14px; margin: 0 9px 0 3px; border-radius: 3px; background: #3b86f7; }
    .check path { fill: none; stroke: #fff; stroke-width: 1.7; stroke-linecap: round; stroke-linejoin: round; }
    .name { font-size: 11px; letter-spacing: -0.08px; padding-top: 2px; }
  `;
  render() {
    return html`<div class="head">Layers Manager</div>
      <div class="tabs"><div class="tab on">Layers</div><div class="tab">Items</div></div>
      <div class="list">
        ${LAYERS.map(([name, color], i) => html`<div class="row">
          <span class=${classMap({ mark: true, cur: i === 0 })}></span><span class="swatch" style="background:${color}"></span>
          <svg class="check" viewBox="0 0 14 14"><path d="M3.500 7.500L6 10.500L10.500 3.500" /></svg><span class="name">${name}</span>
        </div>`)}
      </div>`;
  }
}

const TOP = ["save", "|", "boardSetup", "|", "pageSize", "print", "plot", "|", "undo", "redo", "|", "find", "|", "refresh", "zoomIn", "zoomOut", "zoomFit", "zoomArea", "|", "chip", "library", "|", "net", "update", "bug", "|"];
const LEFT = ["drcOff", "*grid", "polar", "inch", "*mm", "cursor", "|", "*ratsnest", "|", "zoneFill", "zoneNone", "zoneOutline", "|", "padSketch", "viaSketch", "trackSketch", "contrast", "|"];
const RIGHT = ["*select", "|", "highlight", "localRats", "|", "chip", "route", "via", "zone", "keepout", "|", "line", "circle", "arc", "polygon", "text", "|", "dimension"];
const STATS: [string, string][] = [["Pads", "493"], ["Vias", "614"], ["Track Segments", "2132"], ["Nodes", "435"], ["Nets", "87"], ["Unrouted", "0"]];

@customElement("app-root")
class AppRoot extends LitElement {
  static styles = css`
    :host { display: block; box-sizing: border-box; width: 1478px; height: 768px; padding: 38px 56px; overflow: hidden; background: #fff; font: 12px Inter, sans-serif; color: #111; }
    .window { display: flex; flex-direction: column; width: 1366px; height: 656px; border-radius: 6px 6px 5px 5px; overflow: hidden; background: #ececec; box-shadow: 0 0 1px 0.5px rgba(0, 0, 0, 0.35), 0 20px 32px rgba(0, 0, 0, 0.43), 0 2px 30px rgba(0, 0, 0, 0.14); }
    .title { box-sizing: border-box; height: 22px; flex: none; display: flex; align-items: center; padding-left: 8px; background: linear-gradient(#e9e9e9, #d0d0d0); border-bottom: 1px solid #adadad; font-size: 13px; color: #4a4a4a; white-space: pre; }
    .light { box-sizing: border-box; width: 12px; height: 12px; border-radius: 50%; margin-right: 8px; border: 1px solid rgba(0, 0, 0, 0.12); }
    .red { background: #ff5f57; } .amber { background: #ffbd2e; } .green { background: #28c940; }
    .app { width: 68px; margin-left: 205px; letter-spacing: -0.05px; }
    .blank { width: 350px; height: 15px; background: #fff; }
    .path { letter-spacing: -0.17px; }
    .bar { display: flex; align-items: center; height: 36px; flex: none; padding-left: 4px; }
    .bar2 { display: flex; align-items: center; box-sizing: border-box; height: 37px; flex: none; padding: 0 0 2px 4px; }
    .vsep { width: 1px; height: 24px; margin: 0 4px; background: #c2c2c2; flex: none; }
    .hsep { width: 24px; height: 1px; margin: 4px 0; background: #b8b8b8; flex: none; }
    .layer { box-sizing: border-box; width: 123px; height: 22px; margin-left: 4px; display: flex; align-items: center; gap: 5px; padding-left: 4px; background: #fff; border: 1px solid #8c8c8c; font-size: 13px; letter-spacing: -0.05px; white-space: nowrap; }
    .chip { box-sizing: border-box; width: 14px; height: 14px; border: 1px solid #000; background: #960f00; }
    .drop { box-sizing: border-box; width: 20px; height: 20px; margin: 0 1px 0 4px; border-radius: 4px; background: #fff; border: 1px solid #c4c4c4; display: grid; place-items: center; }
    .drop path { fill: none; stroke: #444; stroke-width: 1.4; }
    .work { display: flex; height: 517px; flex: none; }
    .tools { display: flex; flex-direction: column; align-items: center; box-sizing: border-box; padding-top: 3px; height: 517px; overflow: hidden; border-bottom: 1px solid #ddd; }
    .tl { width: 37px; } .tr { width: 40px; }
    .center { width: 1125px; height: 515px; display: grid; grid-template-columns: 1112px 13px; grid-template-rows: 502px 13px; }
    .view { border: solid #f2f2f2; border-width: 0 2px 2px 0; }
    .track { background: #fafafa; }
    .corner { background: #f2f2f2; }
    .vthumb { width: 8px; height: 18px; margin: 265px 0 0 3px; border-radius: 4px; background: #c2c2c2; }
    .hthumb { width: 79px; height: 8px; margin: 3px 0 0 588px; border-radius: 4px; background: #c2c2c2; }
    .sash { width: 5px; display: flex; align-items: center; }
    .dot { box-sizing: border-box; width: 6px; height: 6px; margin: 0 0 2px -2px; border: 1px solid #b4b4b4; border-radius: 50%; background: #ddd; flex: none; }
    .work layers-manager { margin-top: -1px; flex: none; }
    .stats { box-sizing: border-box; height: 26px; flex: none; display: grid; grid-template-columns: 56px 52px 114px 64px 54px 100px; padding: 1px 0 0 11px; font-size: 11px; line-height: 13px; border-bottom: 1px solid #b4b4b4; letter-spacing: 0.05px; }
    .status { flex: 1; display: grid; grid-template-columns: 61px 181px 279px 205px 60px; padding-left: 453px; font-size: 11px; line-height: 15px; letter-spacing: 0.06px; white-space: pre; border-top: 1px solid #f8f8f8; }
    .grid-select { margin-left: 1px; }
  `;
  private tools(list: string[], cls: string) {
    return list.map((n) => (n === "|" ? html`<span class=${cls}></span>` : html`<tool-button icon=${n.replace("*", "")} ?active=${n.startsWith("*")}></tool-button>`));
  }
  render() {
    return html`<div class="window">
      <div class="title">
        <span class="light red"></span><span class="light amber"></span><span class="light green"></span>
        <span class="app">Pcbnew —</span><span class="blank"></span><span class="path">/generic-node-se/Hardware/pcb-stm32wl/pcb-stm32wl.kicad_pcb</span>
      </div>
      <div class="bar">
        ${this.tools(TOP, "vsep")}
        <span class="layer"><span class="chip"></span>Top.HF (PgUp)</span>
        <span class="drop"><svg width="8" height="6" viewBox="0 0 8 6"><path d="M1 1.500L4 4.500L7 1.500" /></svg></span>
        ${this.tools(["layerPair", "|", "schematic", "|", "terminal"], "vsep")}
      </div>
      <div class="bar2">
        <mac-select style="width:229px" label="Track: 0.140 mm (5.50 mils) *"></mac-select>
        <mac-select style="width:279px;margin-left:1px" label="Via: 0.80 / 0.40 mm (31.5 / 15.7 mils) *"></mac-select>
        <span class="vsep"></span><tool-button icon="autoTrack"></tool-button><span class="vsep"></span>
        <mac-select class="grid-select" style="width:257px" label="Grid: 1.2700 mm (50.00 mils)"></mac-select>
        <span class="vsep"></span>
        <mac-select style="width:138px" label="Zoom Auto"></mac-select>
      </div>
      <div class="work">
        <div class="tools tl">${this.tools(LEFT, "hsep")}</div>
        <div class="center">
          <div class="view"><pcb-canvas></pcb-canvas></div>
          <div class="track"><div class="vthumb"></div></div>
          <div class="track"><div class="hthumb"></div></div>
          <div class="corner"></div>
        </div>
        <div class="tools tr">${this.tools(RIGHT, "hsep")}</div>
        <div class="sash"><span class="dot"></span></div>
        <layers-manager></layers-manager>
      </div>
      <div class="stats">${STATS.map(([k, v]) => html`<div>${k}<br />${v}</div>`)}</div>
      <div class="status"><span>Z 1.01</span><span>X 91.440000  Y 40.640000</span><span>dx 91.440000  dy 40.640000  dist 100.064</span><span>grid X 1.270000  Y 1.270000</span><span>mm</span></div>
    </div>`;
  }
}
